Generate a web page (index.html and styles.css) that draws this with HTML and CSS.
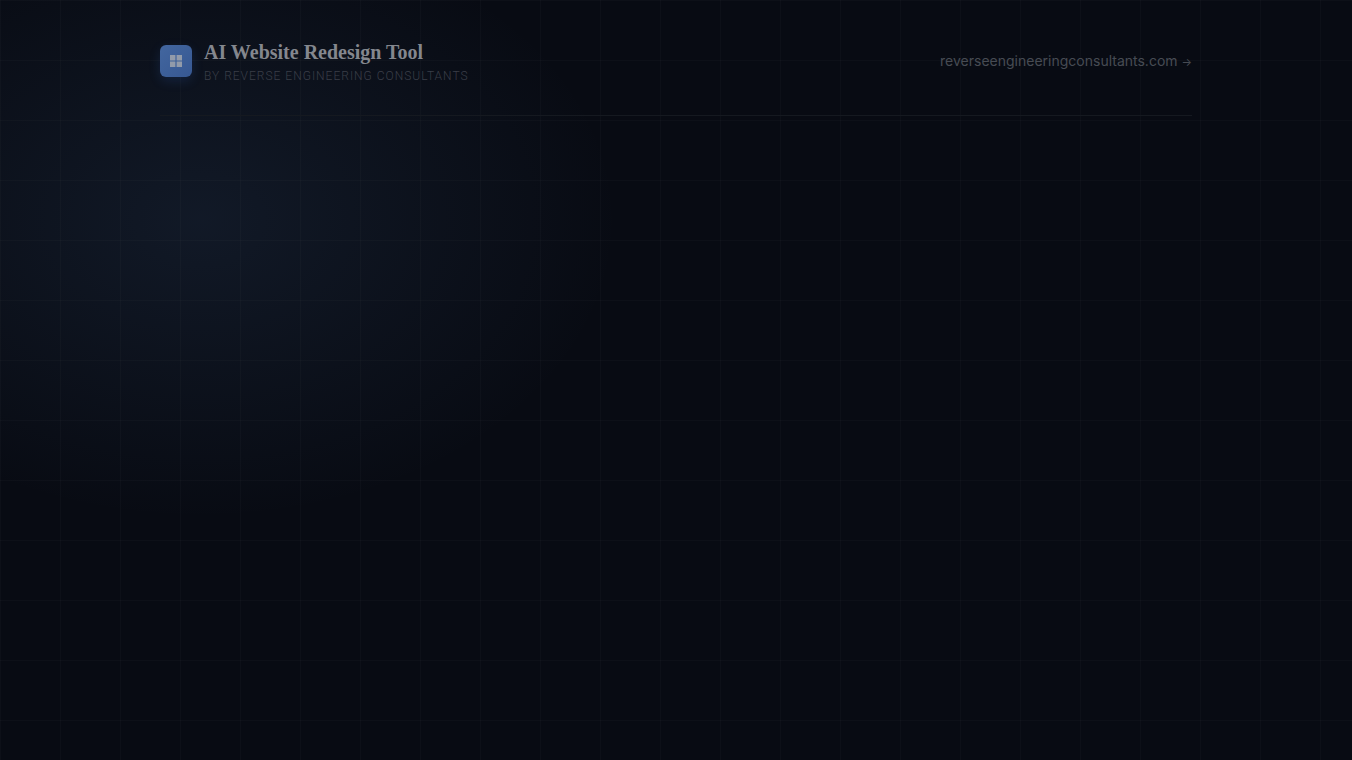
FILE: index.html
```
<!DOCTYPE html>
<html lang="en">
<head>
  <meta charset="utf-8">
  <meta name="viewport" content="width=device-width, initial-scale=1">
  <title>AI Website Redesign Tool</title>
  <link rel="stylesheet" href="styles.css">
</head>
<body>
  <div class="page">
    <header class="header">
      <div class="brand">
        <div class="brand-icon">
          <svg width="12" height="12" viewBox="0 0 12 12" aria-hidden="true">
            <path d="M0 0h5.4v5.4H0zM6.6 0H12v5.4H6.6zM0 6.6h5.4V12H0zM6.6 6.6H12V12H6.6z" fill="currentColor"/>
          </svg>
        </div>
        <div>
          <div class="brand-name">AI Website Redesign Tool</div>
          <div class="brand-sub">by Reverse Engineering Consultants</div>
        </div>
      </div>
      <a class="header-link" href="https://reverseengineeringconsultants.com">reverseengineeringconsultants.com <span class="arrow">→</span></a>
    </header>
  </div>
</body>
</html>
```

FILE: styles.css
```
* {
  box-sizing: border-box;
  margin: 0;
  padding: 0;
}
body {
  min-height: 100vh;
  background-color: #080b13;
  /* 60px grid over a soft glow */
  background-image:
    linear-gradient(rgba(255, 255, 255, 0.02) 1px, transparent 1px),
    linear-gradient(90deg, rgba(255, 255, 255, 0.02) 1px, transparent 1px),
    radial-gradient(ellipse 420px 300px at 200px 220px, rgba(100, 150, 215, 0.1), transparent);
  background-size: 60px 60px, 60px 60px, 100% 100%;
  font-family: Inter, "Liberation Sans", sans-serif;
}
.page {
  max-width: 1080px;
  margin: 0 auto;
  padding: 0 24px;
}
.header {
  display: flex;
  align-items: center;
  justify-content: space-between;
  padding: 38px 0 31px;
  border-bottom: 1px solid #151920;
}
.brand {
  display: flex;
  align-items: center;
  gap: 12px;
}
.brand-icon {
  display: flex;
  align-items: center;
  justify-content: center;
  width: 32px;
  height: 32px;
  border-radius: 6px;
  background: linear-gradient(135deg, #42669f, #375892);
  box-shadow: 0 4px 12px rgba(59, 130, 246, 0.15);
  color: #929baa;
}
.brand-name {
  color: #84878e;
  font-family: "Liberation Serif", serif;
  font-size: 20px;
  font-weight: 700;
  line-height: 28px;
}
.brand-sub {
  margin-top: 2px;
  color: #3a3e48;
  font-family: Roboto, "Liberation Sans", sans-serif;
  font-size: 12px;
  font-weight: 300;
  letter-spacing: 1px;
  line-height: 16px;
  text-transform: uppercase;
}
.header-link {
  color: #474b53;
  font-size: 14px;
  line-height: 20px;
  text-decoration: none;
}
.arrow {
  font-size: 11px;
}
```
